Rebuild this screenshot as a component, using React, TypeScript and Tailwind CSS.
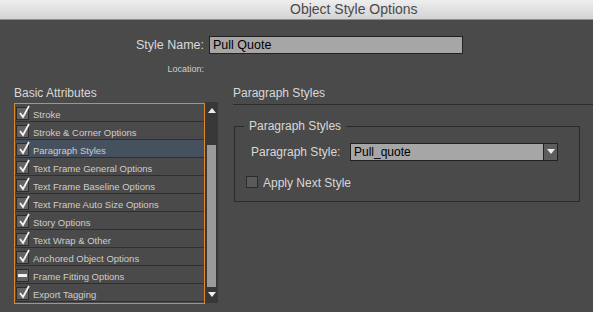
const font = { fontFamily: '"Liberation Sans", Arial, sans-serif' };

type Attr = { label: string; state: "on" | "mixed"; selected?: boolean };

const attrs: Attr[] = [
  { label: "Stroke", state: "on" },
  { label: "Stroke & Corner Options", state: "on" },
  { label: "Paragraph Styles", state: "on", selected: true },
  { label: "Text Frame General Options", state: "on" },
  { label: "Text Frame Baseline Options", state: "on" },
  { label: "Text Frame Auto Size Options", state: "on" },
  { label: "Story Options", state: "on" },
  { label: "Text Wrap & Other", state: "on" },
  { label: "Anchored Object Options", state: "on" },
  { label: "Frame Fitting Options", state: "mixed" },
  { label: "Export Tagging", state: "on" },
];

function CheckBox({ state }: { state: "on" | "mixed" }) {
  return (
    <span className="relative w-[13px] h-[13px] shrink-0 bg-[#626262] border border-[#2c2c2c]">
      {state === "on" ? (
        <svg className="absolute -top-[3px] left-[1px]" width="13" height="14" viewBox="0 0 13 14">
          <path d="M2 8 L5 12 L11 1" fill="none" stroke="#f2f2f2" strokeWidth="1.8" />
        </svg>
      ) : (
        <span className="absolute left-[1px] right-[1px] top-[4px] h-[3px] bg-[#f2f2f2]" />
      )}
    </span>
  );
}

export default function App() {
  return (
    <div className="w-[593px] h-[312px] overflow-hidden bg-[#4a4a4a] text-[#d8d8d8]" style={font}>
      <div className="h-[20px] border-b border-[#8e8e8e] bg-gradient-to-b from-[#eeeeee] to-[#d3d3d3] flex items-center pl-[290px] text-[14px] text-[#4a4a4a]">
        Object Style Options
      </div>

      <div className="flex items-center mt-[16px] h-[18px]">
        <span className="w-[204px] text-right text-[12.5px]">Style Name:</span>
        <div className="ml-[5px] w-[254px] h-[18px] bg-[#a6a6a6] border border-[#222] text-black text-[12.5px] leading-[16px] pl-[3px]">
          Pull Quote
        </div>
      </div>
      <div className="mt-[9px] w-[204px] text-right text-[9px] leading-[12px] text-[#cfcfcf]">Location:</div>

      <div className="flex mt-[11px]">
        <div className="w-[219px] pl-[14px] shrink-0">
          <div className="text-[12px] leading-[14px]">Basic Attributes</div>
          <div className="flex mt-[2px] h-[202px]">
            <div className="w-[191px] mt-[1px] h-[201px] border border-[#d98a2b]">
              {attrs.map((a) => (
                <div
                  key={a.label}
                  className={`flex items-center gap-[4px] h-[18px] pl-[1px] pt-[2px] border-b border-[#2f2f2f] text-[9.5px] text-[#cdcdcd] ${a.selected ? "bg-[#45515f]" : ""}`}
                >
                  <CheckBox state={a.state} />
                  <span className="pt-[3px]">{a.label}</span>
                </div>
              ))}
            </div>
            <div className="w-[13px] h-[201px] bg-[#383838] flex flex-col items-center">
              <svg className="mt-[5px]" width="8" height="6" viewBox="0 0 8 6">
                <path d="M0 6 L4 1 L8 6 Z" fill="#eee" />
              </svg>
              <div className="mt-[32px] w-[9px] h-[142px] bg-[#9b9b9b]" />
              <svg className="mt-[5px]" width="8" height="6" viewBox="0 0 8 6">
                <path d="M0 0 L4 5 L8 0 Z" fill="#eee" />
              </svg>
            </div>
          </div>
        </div>

        <div className="flex-1 pl-[14px]">
          <div className="text-[12px] leading-[14px]">Paragraph Styles</div>
          <div className="mt-[4px] border-t border-[#2c2c2c] h-0" />
          <div className="relative mt-[21px] ml-[1px] w-[346px] h-[76px] border border-[#2a2a2a]">
            <span className="absolute -top-[8px] left-[9px] px-[5px] bg-[#4a4a4a] text-[12px] leading-[14px]">
              Paragraph Styles
            </span>
            <div className="flex items-center mt-[16px] ml-[16px]">
              <span className="text-[12px] w-[99px]">Paragraph Style:</span>
              <div className="flex w-[208px] h-[18px] border border-[#222] bg-[#a6a6a6]">
                <span className="flex-1 text-black text-[12px] leading-[16px] pl-[3px]">Pull_quote</span>
                <span className="w-[14px] bg-[#5d5d5d] border-l border-[#222] flex items-center justify-center">
                  <svg width="8" height="6" viewBox="0 0 8 6">
                    <path d="M0 0 L4 5 L8 0 Z" fill="#eee" />
                  </svg>
                </span>
              </div>
            </div>
            <div className="flex items-center mt-[14px] ml-[11px] h-[14px]">
              <span className="w-[12px] h-[12px] bg-[#5a5a5a] border border-[#2c2c2c]" />
              <span className="ml-[5px] text-[12px] leading-[14px] pt-[1px]">Apply Next Style</span>
            </div>
          </div>
        </div>
      </div>
    </div>
  );
}
